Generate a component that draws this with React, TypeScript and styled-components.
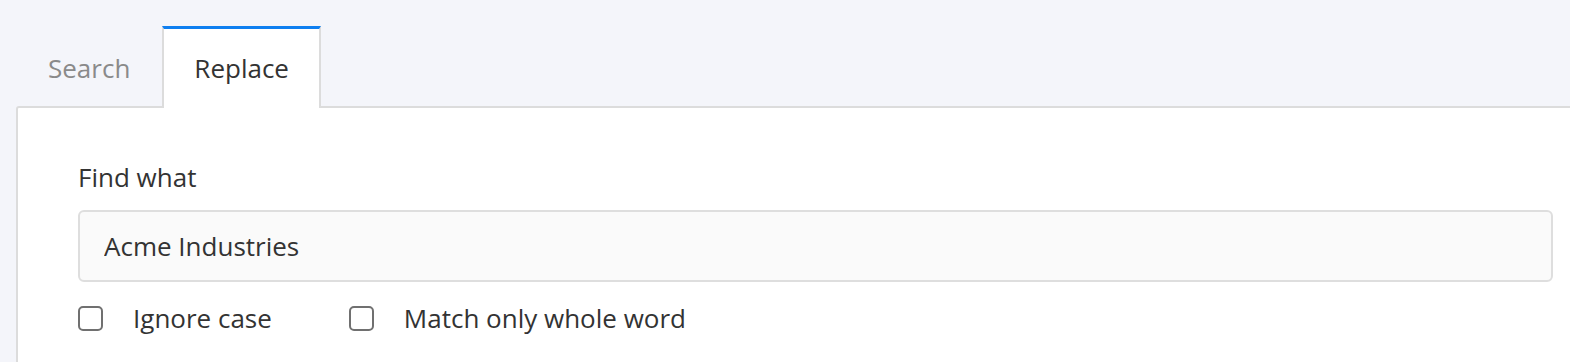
import { useState } from "react";
import styled, { createGlobalStyle } from "styled-components";

const GlobalStyle = createGlobalStyle`
  html, body {
    margin: 0;
    padding: 0;
    background: #f4f5fa;
    overflow: hidden;
  }
  body {
    font-family: "Open Sans", "Noto Sans", sans-serif;
    color: #333;
  }
`;

const tabs = ["Search", "Replace"];

export default function App() {
  const [active, setActive] = useState("Replace");
  const [ignoreCase, setIgnoreCase] = useState(false);
  const [wholeWord, setWholeWord] = useState(false);

  return (
    <Page>
      <GlobalStyle />
      <TabBar>
        {tabs.map((t) => (
          <Tab key={t} $active={active === t} onClick={() => setActive(t)}>
            {t}
          </Tab>
        ))}
      </TabBar>
      <Panel>
        <Label htmlFor="find">Find what</Label>
        <Input id="find" defaultValue="Acme Industries" />
        <Options>
          <Option>
            <Checkbox
              type="checkbox"
              checked={ignoreCase}
              onChange={(e) => setIgnoreCase(e.target.checked)}
            />
            <span>Ignore case</span>
          </Option>
          <Option>
            <Checkbox
              type="checkbox"
              checked={wholeWord}
              onChange={(e) => setWholeWord(e.target.checked)}
            />
            <span>Match only whole word</span>
          </Option>
        </Options>
      </Panel>
    </Page>
  );
}

const Page = styled.div`
  width: 1570px;
  height: 362px;
  padding: 26px 0 0 16px;
  box-sizing: border-box;
  overflow: hidden;
`;

const TabBar = styled.div`
  display: flex;
  position: relative;
  z-index: 1;
  margin-bottom: -2px;
`;

const Tab = styled.button<{ $active: boolean }>`
  height: 82px;
  padding: 0 30px 2px;
  font-family: inherit;
  font-size: 26px;
  background: ${(p) => (p.$active ? "#fff" : "transparent")};
  color: ${(p) => (p.$active ? "#333" : "#8a8a8a")};
  border: 2px solid ${(p) => (p.$active ? "#dcdcdc" : "transparent")};
  border-top: 3px solid ${(p) => (p.$active ? "#0f7ff0" : "transparent")};
  border-bottom: none;
  cursor: pointer;
`;

const Panel = styled.div`
  box-sizing: border-box;
  width: 1620px;
  min-height: 260px;
  background: #fff;
  border: 2px solid #dcdcdc;
  border-radius: 3px 0 0 0;
  padding: 51px 81px 0 60px;
  display: flex;
  flex-direction: column;
`;

const Label = styled.label`
  font-size: 26px;
  line-height: 36px;
  margin-bottom: 15px;
`;

const Input = styled.input`
  height: 72px;
  box-sizing: border-box;
  padding: 0 24px;
  font-family: inherit;
  font-size: 26px;
  color: #333;
  background: #fafafa;
  border: 2px solid #dedede;
  border-radius: 6px;
  outline: none;
`;

const Options = styled.div`
  display: flex;
  gap: 77px;
  margin-top: 18px;
`;

const Option = styled.label`
  display: flex;
  align-items: center;
  gap: 30px;
  font-size: 26px;
  line-height: 36px;
  cursor: pointer;
`;

const Checkbox = styled.input`
  appearance: none;
  margin: 0;
  width: 25px;
  height: 25px;
  border: 2px solid #707070;
  border-radius: 5px;
  background: #fff;
  box-sizing: border-box;
  cursor: pointer;

  &:checked {
    background: #0f7ff0;
    border-color: #0f7ff0;
  }
`;
